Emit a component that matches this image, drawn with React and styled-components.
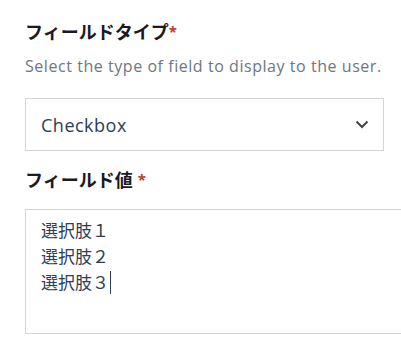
import React from 'react';
import styled, { createGlobalStyle } from 'styled-components';

const GlobalStyle = createGlobalStyle`
    html, body {
        margin: 0;
        padding: 0;
        background: #ffffff;
        overflow: hidden;
    }
    body {
        font-family: "Noto Sans CJK JP", "Noto Sans", sans-serif;
    }
`;

const Form = styled.div`
    width: 401px;
    height: 347px;
    box-sizing: border-box;
    padding: 19px 0 0 25px;
    overflow: hidden;
`;

const Field = styled.div`
    display: flex;
    flex-flow: column;
    margin-bottom: ${props => props.gap || 0}px;
`;

const Label = styled.label`
    font-family: "Noto Sans CJK JP", sans-serif;
    font-size: 18px;
    font-weight: 700;
    line-height: 24px;
    color: #1b1b1f;
`;

const Required = styled.span`
    color: #c0392b;
    font-family: "Noto Sans", sans-serif;
    font-weight: 700;
    font-size: 15px;
    margin-left: ${props => props.spaced ? 5 : 0}px;
    vertical-align: 2px;
`;

const Help = styled.p`
    margin: 12px 0 0;
    font-family: "Open Sans", sans-serif;
    font-size: 16px;
    letter-spacing: 0.55px;
    line-height: 22px;
    color: #6f7682;
    white-space: nowrap;
`;

const SelectBox = styled.div`
    display: flex;
    align-items: center;
    justify-content: space-between;
    box-sizing: border-box;
    width: 359px;
    height: 53px;
    margin-top: 21px;
    padding: 0 14px 0 15px;
    border: 1px solid #d3d5da;
    background: #fff;
    font-family: "Open Sans", sans-serif;
    font-size: 18px;
    letter-spacing: 0.5px;
    color: #2d3e55;
`;

const Chevron = () => (
    <svg width="14" height="9" viewBox="0 0 14 9">
        <path d="M1.5 1.5 L7 7 L12.5 1.5" fill="none" stroke="#444" strokeWidth="2" />
    </svg>
);

const TextArea = styled.div`
    box-sizing: border-box;
    width: 390px;
    height: 125px;
    margin-top: 18px;
    padding: 7px 15px;
    border: 1px solid #d3d5da;
    font-family: "Noto Sans CJK JP", sans-serif;
    font-size: 17px;
    line-height: 26px;
    color: #2d3e55;
`;

const Caret = styled.span`
    display: inline-block;
    width: 1px;
    height: 23px;
    margin-left: 1px;
    vertical-align: -5px;
    background: #2d3e55;
`;

export default function App() {
    const options = ['選択肢１', '選択肢２', '選択肢３'];
    return (
        <>
            <GlobalStyle />
            <Form>
                <Field gap={16}>
                    <Label>フィールドタイプ<Required>*</Required></Label>
                    <Help>Select the type of field to display to the user.</Help>
                    <SelectBox>
                        <span>Checkbox</span>
                        <Chevron />
                    </SelectBox>
                </Field>
                <Field>
                    <Label>フィールド値<Required spaced>*</Required></Label>
                    <TextArea>
                        {options.map((o, i) => (
                            <div key={i}>
                                {o}
                                {i === options.length - 1 && <Caret />}
                            </div>
                        ))}
                    </TextArea>
                </Field>
            </Form>
        </>
    );
}
